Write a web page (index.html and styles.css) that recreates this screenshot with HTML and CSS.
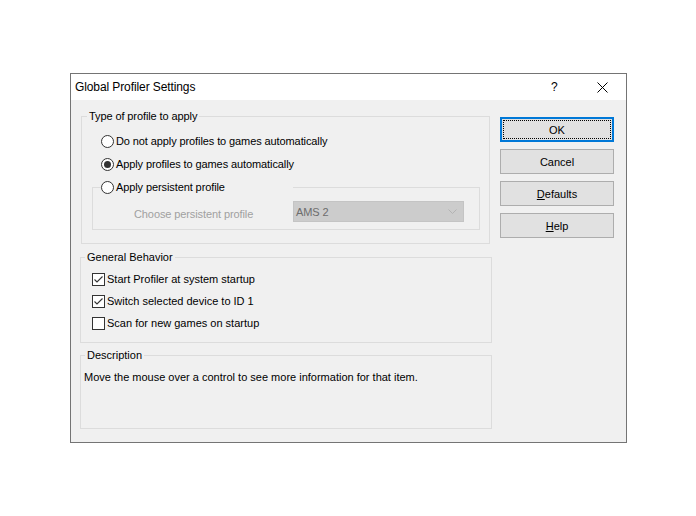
FILE: index.html
```
<!DOCTYPE html>
<html>
<head>
<meta charset="utf-8">
<link rel="stylesheet" href="styles.css">
</head>
<body>
<div class="dialog">
  <div class="titlebar">
    <span class="title">Global Profiler Settings</span>
    <span class="help-btn">?</span>
    <span class="close-btn"><svg width="11" height="11" viewBox="0 0 11 11"><path d="M0.5 0.5 L10.5 10.5 M10.5 0.5 L0.5 10.5" stroke="#000" stroke-width="1" fill="none"/></svg></span>
  </div>
  <div class="body">
    <div class="left">
      <fieldset class="group group-type">
        <legend class="legend">Type of profile to apply</legend>
        <div class="radio-row"><span class="radio"></span><span>Do not apply profiles to games automatically</span></div>
        <div class="radio-row"><span class="radio checked"></span><span>Apply profiles to games automatically</span></div>
        <fieldset class="inner">
          <legend class="inner-legend"><span class="radio"></span><span>Apply persistent profile</span></legend>
          <div class="persist-row">
            <span class="persist-label">Choose persistent profile</span>
            <div class="combo"><span>AMS 2</span><svg width="9" height="5" viewBox="0 0 9 5"><path d="M0.5 0.5 L4.5 4.5 L8.5 0.5" stroke="#b3b3b3" fill="none"/></svg></div>
          </div>
        </fieldset>
      </fieldset>
      <fieldset class="group group-behavior">
        <legend class="legend">General Behavior</legend>
        <div class="check-row"><span class="check"><svg width="11" height="11" viewBox="0 0 11 11"><path d="M1.5 5.5 L4 8 L9.5 2.5" stroke="#333" stroke-width="1.1" fill="none"/></svg></span><span>Start Profiler at system startup</span></div>
        <div class="check-row"><span class="check"><svg width="11" height="11" viewBox="0 0 11 11"><path d="M1.5 5.5 L4 8 L9.5 2.5" stroke="#333" stroke-width="1.1" fill="none"/></svg></span><span>Switch selected device to ID 1</span></div>
        <div class="check-row"><span class="check"></span><span>Scan for new games on startup</span></div>
      </fieldset>
      <fieldset class="group group-desc">
        <legend class="legend">Description</legend>
        <div class="desc-text">Move the mouse over a control to see more information for that item.</div>
      </fieldset>
    </div>
    <div class="right">
      <div class="button default"><span class="focus">OK</span></div>
      <div class="button">Cancel</div>
      <div class="button"><span><u>D</u>efaults</span></div>
      <div class="button"><span><u>H</u>elp</span></div>
    </div>
  </div>
</div>
</body>
</html>
```
FILE: styles.css
```
html, body {
  margin: 0;
  padding: 0;
  background: #ffffff;
}
body {
  font-family: "Liberation Sans", Arial, sans-serif;
  font-size: 11px;
  color: #000;
}
.dialog {
  margin-left: 70px;
  margin-top: 73px;
  width: 555px;
  height: 368px;
  border: 1px solid #747474;
  background: #f0f0f0;
  display: flex;
  flex-direction: column;
}
.titlebar {
  height: 26px;
  background: #ffffff;
  display: flex;
  align-items: center;
  flex: none;
}
.title {
  font-size: 12px;
  letter-spacing: -0.1px;
  margin-left: 4px;
  flex: 1;
}
.help-btn {
  font-size: 12px;
  width: 10px;
  margin-right: 36px;
}
.close-btn {
  display: flex;
  margin-right: 18px;
}
.body {
  flex: 1;
  display: flex;
  padding: 0 12px 0 9px;
  gap: 8px;
}
.left {
  width: 412px;
  display: flex;
  flex-direction: column;
}
.group {
  margin: 0;
  border: 1px solid #dcdcdc;
  min-inline-size: 0;
}
.legend {
  padding: 0 2px;
  line-height: 14px;
}
.group-type {
  margin: 9px 2px 0 1px;
  padding: 11px 9px 13px 10px;
  letter-spacing: -0.1px;
}
.group-type > .legend {
  margin-left: -5px;
}
.radio-row {
  display: flex;
  align-items: center;
  height: 14px;
  margin-left: 9px;
  margin-bottom: 9px;
}
.radio {
  width: 11px;
  height: 11px;
  border: 1px solid #333;
  border-radius: 50%;
  background: #fff;
  margin-right: 2px;
  position: relative;
  flex: none;
}
.radio.checked::after {
  content: "";
  position: absolute;
  left: 2px;
  top: 2px;
  width: 7px;
  height: 7px;
  border-radius: 50%;
  background: #333;
}
.inner {
  margin: 0;
  border: 1px solid #dcdcdc;
  padding: 7px 15px 7px 8px;
  min-inline-size: 0;
}
.inner-legend {
  padding: 0;
  width: 192px;
  height: 14px;
  display: flex;
  align-items: center;
}
.persist-row {
  display: flex;
  align-items: center;
  height: 21px;
  padding-left: 33px;
}
.persist-label {
  width: 159px;
  color: #a0a0a0;
  margin-top: 5px;
}
.combo {
  border: 1px solid #c4c4c4;
  background: #cccccc;
  color: #6d6d6d;
  display: flex;
  align-items: center;
  justify-content: space-between;
  padding: 0 6px 0 2px;
  box-sizing: border-box;
  width: 171px;
  height: 21px;
}
.group-behavior {
  margin: 6px 0 0 0;
  padding: 8px 4px 4px 4px;
}
.check-row {
  display: flex;
  align-items: center;
  height: 14px;
  margin-left: 7px;
  margin-bottom: 8px;
}
.check {
  width: 11px;
  height: 11px;
  border: 1px solid #333;
  background: #fff;
  margin-right: 2px;
  display: flex;
  flex: none;
}
.group-desc {
  margin: 5px 0 0 0;
  padding: 8px 3px 44px 3px;
}
.group-desc > .legend {
  margin-left: 1px;
}
.desc-text {
  line-height: 14px;
}
.right {
  width: 114px;
  display: flex;
  flex-direction: column;
  gap: 7px;
  padding-top: 17px;
}
.button {
  height: 25px;
  box-sizing: border-box;
  border: 1px solid #adadad;
  background: #e1e1e1;
  display: flex;
  align-items: center;
  justify-content: center;
}
.button.default {
  border: 2px solid #0078d7;
  padding: 1px;
}
.focus {
  flex: 1;
  align-self: stretch;
  display: flex;
  align-items: center;
  justify-content: center;
  border: 1px dotted #000;
}
```
